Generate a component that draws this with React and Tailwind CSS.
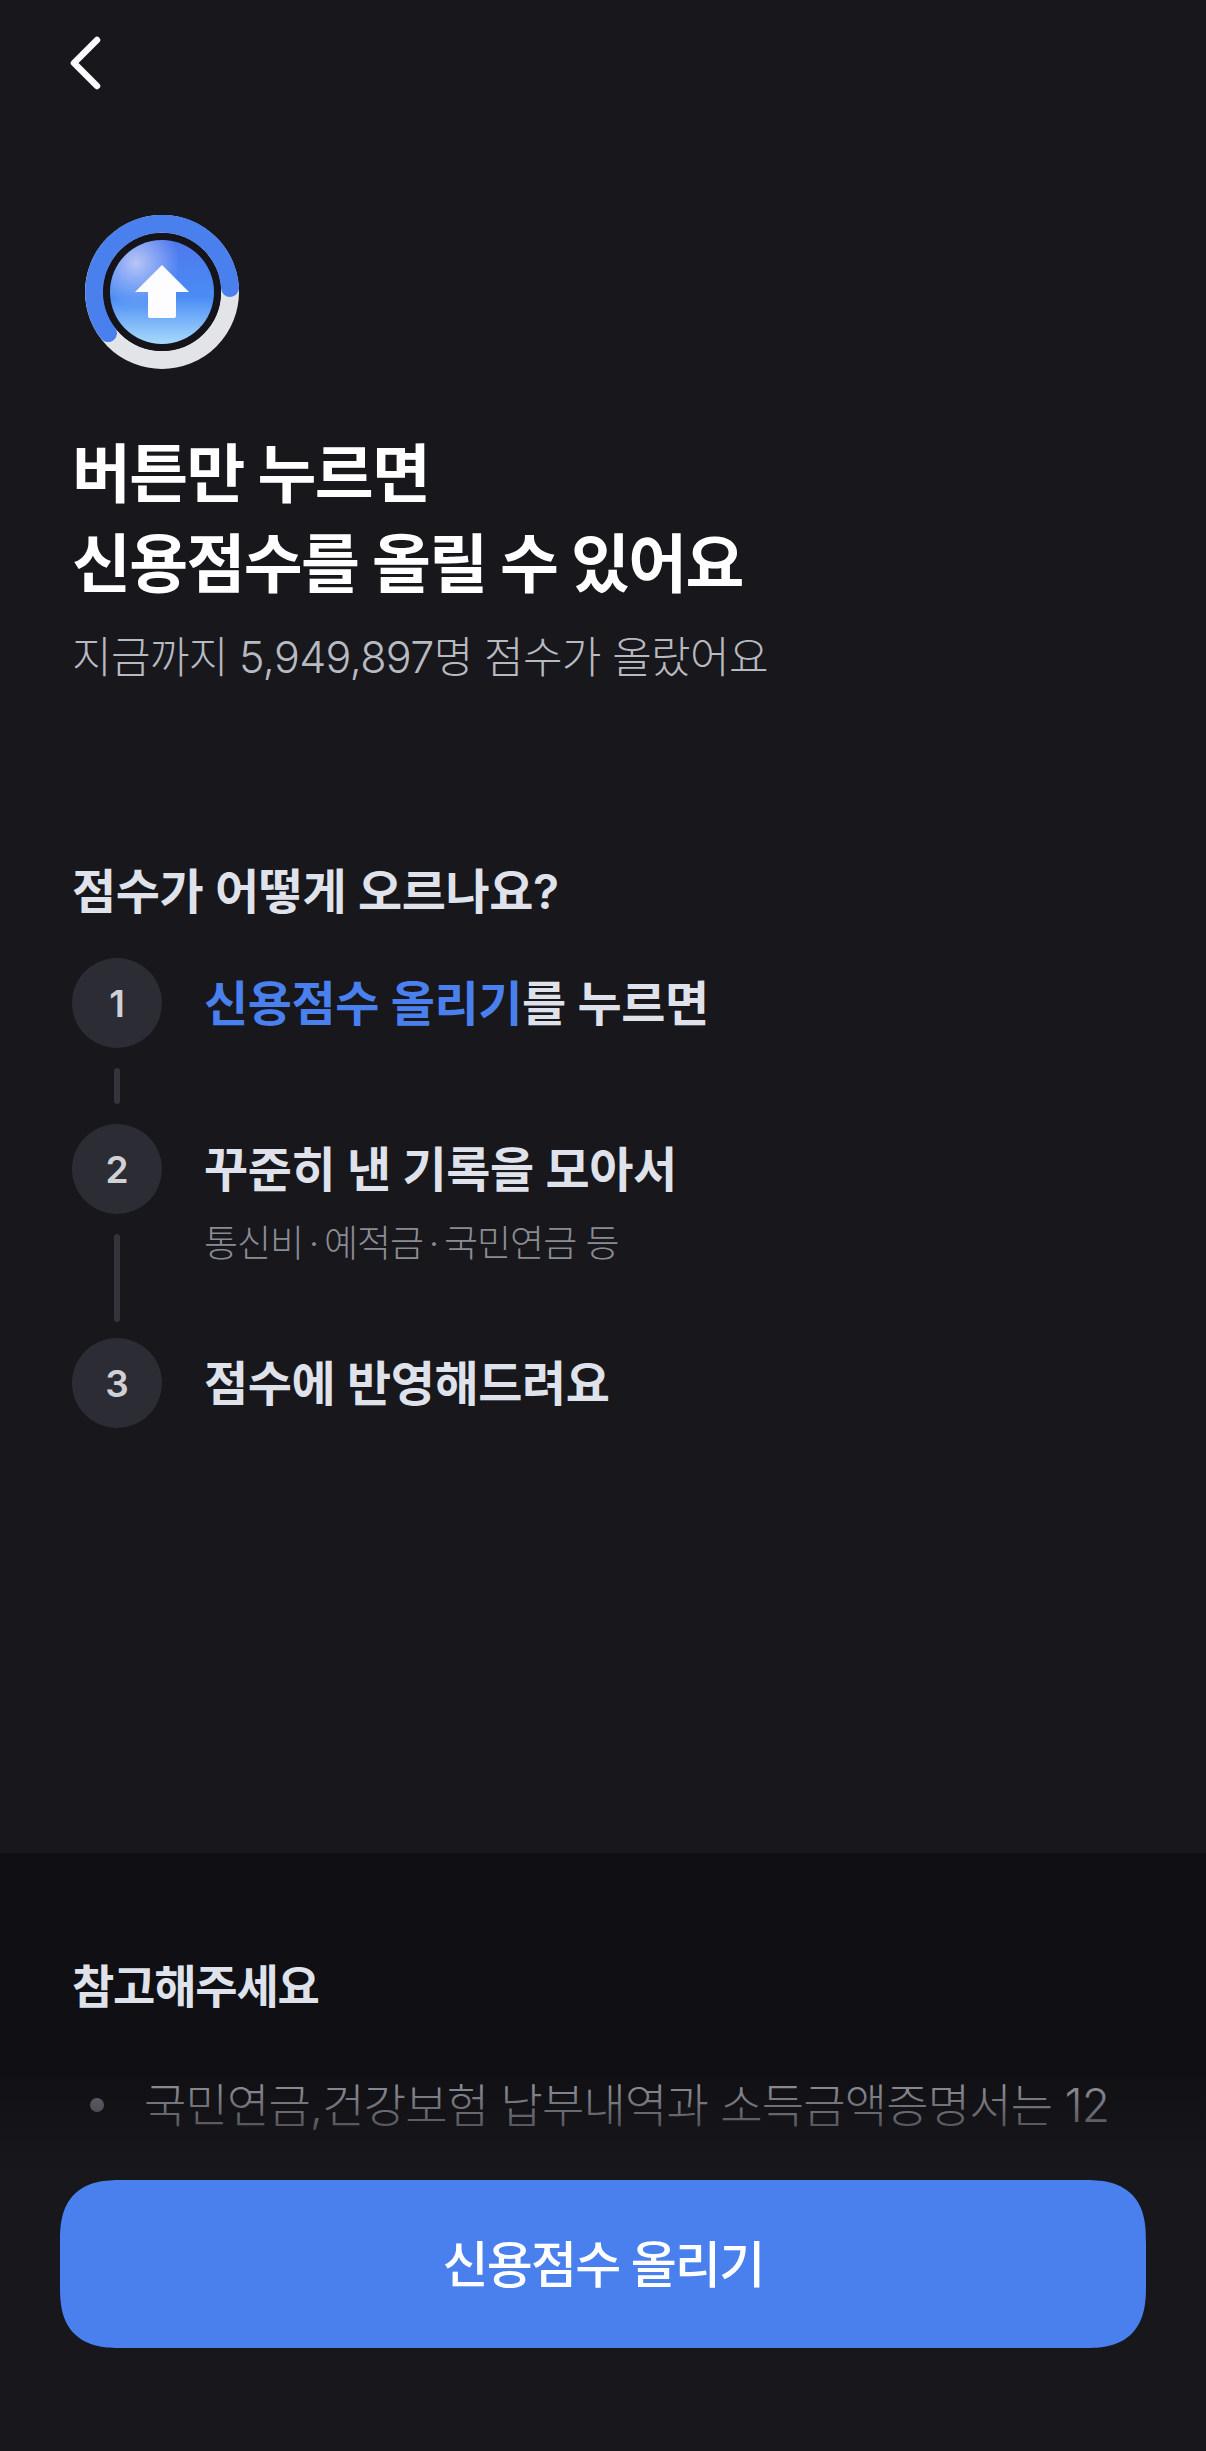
import React from 'react';

function Step({ n, children, sub, tail }) {
  return (
    <div className="flex">
      <div className="flex w-[90px] shrink-0 flex-col items-center">
        <div className="flex h-[90px] w-[90px] items-center justify-center rounded-full bg-[#2b2c34] text-[37px] font-semibold leading-none text-[#d0d1d6]">
          {n}
        </div>
        {tail && <div className={`mt-[20px] w-[6px] rounded-full bg-[#33343c] ${tail}`} />}
      </div>
      <div className="ml-[42px] min-w-0">
        <div className="mt-[16px] text-[48px] font-semibold leading-[60px] tracking-[-0.4px] text-[#dfe2ea]">{children}</div>
        {sub && <div className="mt-[21px] text-[37px] font-light leading-[46px] tracking-[-1px] text-[#8a8c94]">{sub}</div>}
      </div>
    </div>
  );
}

function CoinIcon() {
  return (
    <svg width="154" height="154" viewBox="0 0 154 154" className="block">
      <defs>
        <linearGradient id="coinFill" x1="0" y1="0" x2="0" y2="1">
          <stop offset="0" stopColor="#4f78ee" />
          <stop offset="0.55" stopColor="#4a8cf4" />
          <stop offset="1" stopColor="#a8dafc" />
        </linearGradient>
        <radialGradient id="coinShine" cx="0.25" cy="0.22" r="0.42">
          <stop offset="0" stopColor="#c2ccf8" stopOpacity="0.9" />
          <stop offset="1" stopColor="#c2ccf8" stopOpacity="0" />
        </radialGradient>
      </defs>
      <circle cx="77" cy="77" r="68" fill="none" stroke="#e3e4e8" strokeWidth="18" />
      <path d="M23 118 A68 68 0 1 1 145 73" fill="none" stroke="#4a80ee" strokeWidth="18" strokeLinecap="round" />
      <circle cx="77" cy="77" r="59" fill="#14141a" />
      <circle cx="77" cy="77" r="52" fill="url(#coinFill)" />
      <circle cx="77" cy="77" r="52" fill="url(#coinShine)" />
      <path d="M77 50 L104 77 H91 V101 Q91 103 89 103 H65 Q63 103 63 101 V77 H50 Z" fill="#fdfdff" />
    </svg>
  );
}

export default function App() {
  return (
    <div
      className="relative flex h-[2451px] w-[1206px] flex-col overflow-hidden bg-[#17171c]"
      style={{ fontFamily: '"Inter", "Noto Sans CJK KR", sans-serif' }}
    >
      <div className="h-[1853px] shrink-0 px-[72px]">
        <svg width="32" height="54" viewBox="0 0 32 54" className="mt-[36px] ml-[-2px] block" fill="none" stroke="#fbfbfd" strokeWidth="6.5" strokeLinecap="round" strokeLinejoin="round">
          <path d="M27 4 L4 27 L27 50" />
        </svg>

        <div className="mt-[125px] ml-[13px]">
          <CoinIcon />
        </div>

        <h1 className="mt-[60px] text-[64px] font-bold leading-[90px] tracking-[-1.6px] text-white">
          버튼만 누르면
          <br />
          신용점수를 올릴 수 있어요
        </h1>
        <p className="mt-[20px] text-[43px] font-light leading-[56px] tracking-[-0.65px] text-[#b8bac2]">
          지금까지 5,949,897명 점수가 올랐어요
        </p>

        <h2 className="mt-[177px] text-[48px] font-semibold leading-[60px] tracking-[-0.4px] text-[#dfe2ea]">
          점수가 어떻게 오르나요?
        </h2>

        <div className="mt-[36px] flex flex-col">
          <div className="h-[166px]">
            <Step n="1" tail="h-[36px]">
              <span className="text-[#4a80ee]">신용점수 올리기</span>를 누르면
            </Step>
          </div>
          <div className="h-[214px]">
            <Step n="2" sub={'통신비\u2009·\u2009예적금\u2009·\u2009국민연금 등'} tail="h-[88px]">
              꾸준히 낸 기록을 모아서
            </Step>
          </div>
          <Step n="3">점수에 반영해드려요</Step>
        </div>
      </div>

      <section className="flex-1 bg-[#0f0f14] px-[72px] pt-[103px]">
        <h3 className="text-[46px] font-semibold leading-[60px] tracking-[-1.2px] text-[#dfe2ea]">참고해주세요</h3>
        <div className="mt-[59px] flex items-center">
          <span className="ml-[18px] h-[14px] w-[14px] rounded-full bg-[#74757e]" />
          <span className="ml-[40px] whitespace-nowrap text-[46px] font-light leading-[60px] tracking-[-0.8px] text-[#a4a5ad]">
            국민연금,건강보험 납부내역과 소득금액증명서는 12
          </span>
        </div>
      </section>

      {/* fades the list out above the button */}
      <div className="absolute inset-x-0 bottom-0 h-[376px] bg-[linear-gradient(to_bottom,#17171c14_0px,#17171c_100px)]" />
      <div className="absolute inset-x-0 top-[2180px] px-[60px]">
        <button className="flex h-[168px] w-full items-center justify-center rounded-[62px] bg-[#4a80ee] pt-[3px] text-[50px] font-medium tracking-[-1.8px] text-white [corner-shape:superellipse(1.4)]">
          신용점수 올리기
        </button>
      </div>
    </div>
  );
}
